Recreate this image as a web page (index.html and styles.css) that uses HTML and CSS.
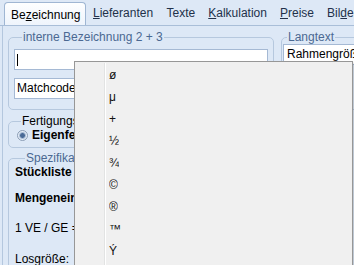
FILE: index.html
```html
<!DOCTYPE html>
<html>
<head>
<meta charset="utf-8">
<link rel="stylesheet" href="styles.css">
</head>
<body>
<div class="app">
  <div class="tabs">
    <div class="tab active">Be<u>z</u>eichnung</div>
    <div class="tab"><u>L</u>ieferanten</div>
    <div class="tab">Texte</div>
    <div class="tab"><u>K</u>alkulation</div>
    <div class="tab"><u>P</u>reise</div>
    <div class="tab">Bil<u>d</u>er</div>
  </div>
  <div class="panel">
    <div class="toprow">
      <fieldset class="grp grp-names">
        <legend>interne Bezeichnung 2 + 3</legend>
        <div class="input"><span class="caret"></span></div>
        <div class="input">Matchcode</div>
      </fieldset>
      <fieldset class="grp grp-lang">
        <legend>Langtext</legend>
        <div class="input lang">Rahmengröße</div>
      </fieldset>
    </div>
    <fieldset class="grp grp-fert">
      <legend class="dark">Fertigungsart</legend>
      <div class="radio-row"><span class="radio"></span><b>Eigenfertigung</b></div>
    </fieldset>
    <fieldset class="grp grp-spez">
      <legend>Spezifikation</legend>
      <div class="row bold r1">Stückliste</div>
      <div class="row bold r2">Mengeneinheiten</div>
      <div class="row r3">1 VE / GE =</div>
      <div class="row r4">Losgröße:</div>
    </fieldset>
  </div>
  <div class="menu">
    <div class="menu-sep"></div>
    <div class="item"><span>ø</span></div>
    <div class="item"><span>μ</span></div>
    <div class="item"><span>+</span></div>
    <div class="item"><span>½</span></div>
    <div class="item"><span>¾</span></div>
    <div class="item"><span>©</span></div>
    <div class="item"><span>®</span></div>
    <div class="item"><span>™</span></div>
    <div class="item"><span>Ý</span></div>
  </div>
</div>
</body>
</html>
```

FILE: styles.css
```css
* { box-sizing: border-box; }
html, body {
  margin: 0;
  padding: 0;
  width: 354px;
  height: 265px;
  overflow: hidden;
  background: #dde8f6;
}
.app {
  position: relative;
  width: 354px;
  height: 265px;
  font-family: "Liberation Sans", Arial, sans-serif;
  font-size: 12px;
  color: #000;
  overflow: hidden;
}
.tabs {
  display: flex;
  height: 26px;
  padding-left: 4px;
  align-items: flex-end;
  white-space: nowrap;
  overflow: hidden;
  border-bottom: 1px solid #a9bed8;
  background: #dde8f6;
}
.tab {
  flex-shrink: 0;
  height: 22px;
  line-height: 20px;
  padding: 0 7px;
  color: #22314a;
}
.tab + .tab + .tab { padding: 0 6.5px; }
.tab u { text-decoration: underline; }
.active {
  width: 82px;
  height: 24px;
  padding: 2px 0 0 6px;
  margin-bottom: -1px;
  color: #000;
  background: linear-gradient(#fdfeff, #eef4fc);
  border: 1px solid #9fb6d3;
  border-bottom: none;
  border-radius: 4px 4px 0 0;
}
.panel {
  height: 240px;
  margin-left: 2px;
  border-left: 1px solid #b4c7de;
  padding: 0 0 0 5px;
}
.toprow {
  display: flex;
  gap: 7px;
  width: 400px;
}
.grp {
  margin: 0;
  border: 1px solid #b6c8de;
  border-radius: 5px;
  padding: 0;
}
.grp legend {
  font-size: 12px;
  line-height: 14px;
  padding: 0 1px;
  margin-left: 8px;
  color: #4b6992;
}
.grp legend.dark { color: #000; margin-left: 4px; }
.grp-names {
  width: 266px;
  height: 80px;
  margin-top: 4px;
  padding: 5px 5px 0 5px;
}
.input {
  height: 21px;
  background: #fff;
  border: 1px solid #a5b9d4;
  padding: 2px 0 0 2px;
  line-height: 15px;
  margin-bottom: 8px;
  white-space: nowrap;
  overflow: hidden;
}
.caret {
  display: inline-block;
  width: 1px;
  height: 12px;
  margin-top: 2px;
  background: #000;
}
.grp-lang {
  width: 120px;
  height: 80px;
  margin-top: 4px;
  padding: 0 0 0 1px;
}
.grp-lang legend { margin-left: 4px; }
.input.lang { padding-left: 3px; }
.grp-fert {
  width: 120px;
  height: 34px;
  margin-top: 4px;
  padding: 0 0 0 8px;
}
.radio-row {
  display: flex;
  align-items: center;
  gap: 4px;
  height: 14px;
}
.radio {
  width: 11px;
  height: 11px;
  border-radius: 50%;
  border: 1px solid #8b9db5;
  background: radial-gradient(circle, #4a6a96 0 2px, #8aa2c2 2.5px, #e6eef8 4px);
}
.grp-spez {
  width: 120px;
  height: 140px;
  margin-top: 3px;
  padding: 0 0 0 6px;
}
.grp-spez legend { margin-left: 10px; }
.row { white-space: nowrap; line-height: 14px; }
.bold { font-weight: bold; }
.r1 { margin-top: 0; }
.r2 { margin-top: 12px; }
.r3 { margin-top: 16px; }
.r4 { margin-top: 17px; }
.menu {
  position: absolute;
  left: 74px;
  top: 61px;
  width: 279px;
  height: 220px;
  background: #f0f0f0;
  border: 1px solid #979797;
  padding: 2px 0 0 0;
  box-shadow: 2px 2px 2px rgba(0,0,0,0.15);
}
.menu-sep {
  position: absolute;
  left: 29px;
  top: 1px;
  bottom: 0;
  width: 2px;
  border-left: 1px solid #e2e3e3;
  border-right: 1px solid #ffffff;
}
.item {
  height: 22px;
  display: flex;
  align-items: center;
  padding-left: 34px;
  font-size: 12px;
  line-height: 14px;
  color: #111;
}
.item span { display: block; height: 14px; overflow: hidden; }
```
